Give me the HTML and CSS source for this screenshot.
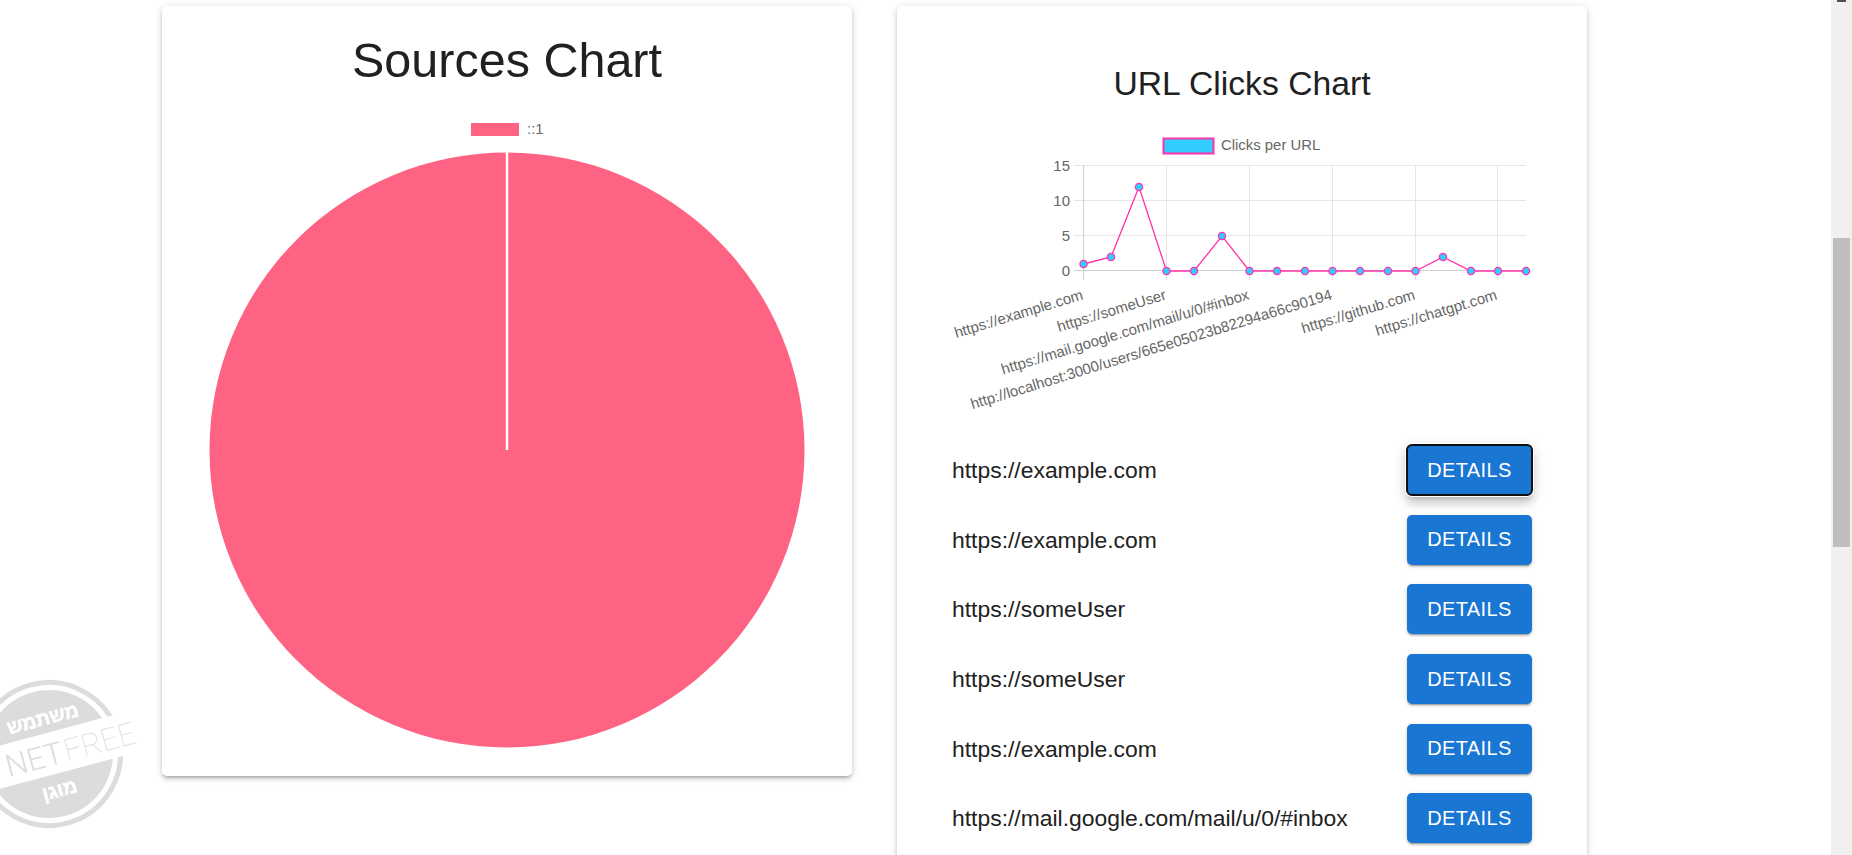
FILE: index.html
```html
<!DOCTYPE html>
<html lang="en">
<head>
<meta charset="utf-8">
<title>Statistics</title>
<link rel="stylesheet" href="styles.css">
</head>
<body>
<div class="viewport">
  <main class="page">
    <section class="card card-sources">
      <h3 class="title-large">Sources Chart</h3>
      <svg class="pie" width="690" height="640" viewBox="162 120 690 640" role="img">
        <rect class="legend-pie" x="471" y="123" width="48" height="13"/>
        <text class="legend-text" x="527" y="134">::1</text>
        <circle class="pie-disc" cx="507" cy="450" r="297.5"/>
        <line class="pie-gap" x1="507" y1="152" x2="507" y2="450"/>
      </svg>
    </section>
    <section class="card card-urls">
      <h4 class="title-medium">URL Clicks Chart</h4>
      <svg class="line-chart" width="690" height="300" viewBox="897 125 690 300" role="img">
        <rect class="legend-line" x="1163.5" y="138.5" width="50" height="15"/>
        <text class="legend-text" x="1221" y="150">Clicks per URL</text>
        <g class="grid">
          <line x1="1074" y1="165.5" x2="1526" y2="165.5"/>
          <line x1="1074" y1="200.5" x2="1526" y2="200.5"/>
          <line x1="1074" y1="235.5" x2="1526" y2="235.5"/>
          <line x1="1166.5" y1="165" x2="1166.5" y2="280"/>
          <line x1="1249.5" y1="165" x2="1249.5" y2="280"/>
          <line x1="1332.5" y1="165" x2="1332.5" y2="280"/>
          <line x1="1415.5" y1="165" x2="1415.5" y2="280"/>
          <line x1="1497.5" y1="165" x2="1497.5" y2="280"/>
        </g>
        <g class="grid-axis">
          <line x1="1074" y1="270.5" x2="1526" y2="270.5"/>
          <line x1="1083.5" y1="165" x2="1083.5" y2="280"/>
        </g>
        <g class="tick-y">
          <text x="1070" y="170.5">15</text>
          <text x="1070" y="205.5">10</text>
          <text x="1070" y="240.5">5</text>
          <text x="1070" y="275.5">0</text>
        </g>
        <g class="tick-x">
          <text x="1084" y="299" transform="rotate(-17 1084 299)">https://example.com</text>
          <text x="1167" y="299" transform="rotate(-17 1167 299)">https://someUser</text>
          <text x="1250" y="299" transform="rotate(-17 1250 299)">https://mail.google.com/mail/u/0/#inbox</text>
          <text x="1333" y="299" transform="rotate(-17 1333 299)">http://localhost:3000/users/665e05023b82294a66c90194</text>
          <text x="1416" y="299" transform="rotate(-17 1416 299)">https://github.com</text>
          <text x="1498" y="299" transform="rotate(-17 1498 299)">https://chatgpt.com</text>
        </g>
        <polyline class="series" points="1083.5,264 1111,257 1139,187 1166.5,271 1194,271 1222,236 1249.5,271 1277,271 1305,271 1332.5,271 1360,271 1388,271 1415.5,271 1443,257 1471,271 1498,271 1526,271"/>
        <g class="points">
          <circle cx="1083.5" cy="264" r="3.6"/><circle cx="1111" cy="257" r="3.6"/><circle cx="1139" cy="187" r="3.6"/>
          <circle cx="1166.5" cy="271" r="3.6"/><circle cx="1194" cy="271" r="3.6"/><circle cx="1222" cy="236" r="3.6"/>
          <circle cx="1249.5" cy="271" r="3.6"/><circle cx="1277" cy="271" r="3.6"/><circle cx="1305" cy="271" r="3.6"/>
          <circle cx="1332.5" cy="271" r="3.6"/><circle cx="1360" cy="271" r="3.6"/><circle cx="1388" cy="271" r="3.6"/>
          <circle cx="1415.5" cy="271" r="3.6"/><circle cx="1443" cy="257" r="3.6"/><circle cx="1471" cy="271" r="3.6"/>
          <circle cx="1498" cy="271" r="3.6"/><circle cx="1526" cy="271" r="3.6"/>
        </g>
      </svg>
      <ul class="url-list">
        <li class="url-row"><span class="url-text">https://example.com</span><button class="details details-focus" type="button">Details</button></li>
        <li class="url-row"><span class="url-text">https://example.com</span><button class="details" type="button">Details</button></li>
        <li class="url-row"><span class="url-text">https://someUser</span><button class="details" type="button">Details</button></li>
        <li class="url-row"><span class="url-text">https://someUser</span><button class="details" type="button">Details</button></li>
        <li class="url-row"><span class="url-text">https://example.com</span><button class="details" type="button">Details</button></li>
        <li class="url-row"><span class="url-text">https://mail.google.com/mail/u/0/#inbox</span><button class="details" type="button">Details</button></li>
      </ul>
    </section>
  </main>
  <div class="scrollbar" aria-hidden="true">
    <span class="scroll-arrow"></span>
    <span class="scroll-thumb"></span>
  </div>
</div>
<svg class="stamp" width="150" height="160" viewBox="0 0 150 160" aria-label="NetFree">
  <g transform="rotate(-15 49 79)">
    <circle class="stamp-ring" cx="49" cy="79" r="71.5"/>
    <circle class="stamp-inner" cx="49" cy="79" r="64"/>
    <rect class="stamp-band" x="-40" y="58" width="230" height="42"/>
    <text class="stamp-he" x="52" y="50" direction="rtl" lang="he">משתמש</text>
    <text class="stamp-he" x="50" y="123" direction="rtl" lang="he">מוגן</text>
    <text class="stamp-net" x="4" y="91">NET<tspan class="stamp-free" dx="2">FREE</tspan></text>
  </g>
</svg>
</body>
</html>
```
FILE: styles.css
```css
* { box-sizing: border-box; }
html, body { margin: 0; height: 100%; overflow: hidden; background: #fff; }
body { font-family: "Liberation Sans", Arial, sans-serif; color: #212121; }

.viewport { display: flex; height: 855px; }
.page {
  flex: 1;
  display: flex;
  align-items: flex-start;
  gap: 45px;
  padding: 6px 0 0 162px;
  overflow: hidden;
  height: 855px;
}
.scrollbar { width: 21px; background: #f0f0f0; display: flex; flex-direction: column; align-items: center; }
.scroll-arrow { width: 9px; height: 2px; background: #505050; }
.scroll-thumb { width: 17px; height: 309px; margin-top: 236px; background: #bebebe; }

.card {
  width: 690px;
  flex: none;
  background: #fff;
  border-radius: 5px;
  box-shadow: 0 3px 3px -2px rgba(0,0,0,.2), 0 3px 4px 0 rgba(0,0,0,.14), 0 1px 8px 0 rgba(0,0,0,.12);
}
.card-sources { height: 770px; }
.card-urls { height: 900px; }

.title-large { margin: 0; padding-top: 18px; height: 114px; font-size: 48.5px; font-weight: 400; line-height: 72px; text-align: center; }
.title-medium { margin: 0; padding-top: 56px; height: 119px; font-size: 33.7px; font-weight: 400; line-height: 42px; text-align: center; }
.pie, .line-chart { display: block; }

.legend-pie { fill: #ff6384; }
.legend-text { font-size: 14.9px; fill: #666; }
.pie-disc { fill: #ff6384; }
.pie-gap { stroke: #fff; stroke-width: 2.5; }

.legend-line { fill: #33ccff; stroke: #ff33aa; stroke-width: 2; }
.grid line { stroke: #e6e6e6; stroke-width: 1; }
.grid-axis line { stroke: #cfcfcf; stroke-width: 1; }
.tick-y text { font-size: 15px; fill: #666; text-anchor: end; }
.tick-x text { font-size: 14.95px; fill: #666; text-anchor: end; }
.series { fill: none; stroke: #ff33aa; stroke-width: 1.3; }
.points circle { fill: #33ccff; stroke: #ff33aa; stroke-width: 1.3; }

.url-list { list-style: none; margin: 20px 0 0; padding: 0 55px; display: flex; flex-direction: column; gap: 19.7px; }
.url-row { display: flex; justify-content: space-between; align-items: center; height: 50px; }
.url-text { font-size: 22.9px; line-height: 30px; }
.details {
  width: 125px;
  height: 50px;
  border: 0;
  border-radius: 5px;
  background: #1976d2;
  color: #fff;
  font: 500 20px "Liberation Sans", Arial, sans-serif;
  letter-spacing: .4px;
  text-transform: uppercase;
  box-shadow: 0 3px 1px -2px rgba(0,0,0,.2), 0 2px 2px 0 rgba(0,0,0,.14), 0 1px 5px 0 rgba(0,0,0,.12);
}
.details-focus {
  outline: 2px solid #101010;
  outline-offset: -1px;
  box-shadow: 0 0 0 2px #fff, 0 5px 5px -3px rgba(0,0,0,.2), 0 8px 10px 1px rgba(0,0,0,.14), 0 3px 14px 2px rgba(0,0,0,.12);
}

.stamp { position: fixed; left: 0; top: 675px; pointer-events: none; }
.stamp-ring { fill: none; stroke: #dcdcdc; stroke-width: 5; }
.stamp-inner { fill: #dcdcdc; }
.stamp-band { fill: #fff; }
.stamp-he { font-family: "Liberation Sans", sans-serif; font-size: 19.5px; font-weight: 700; fill: #fff; stroke: #fff; stroke-width: .5; text-anchor: middle; }
.stamp-net { font-family: Roboto, sans-serif; font-size: 31px; font-weight: 300; fill: #dcdcdc; }
.stamp-free { font-weight: 100; }
```
